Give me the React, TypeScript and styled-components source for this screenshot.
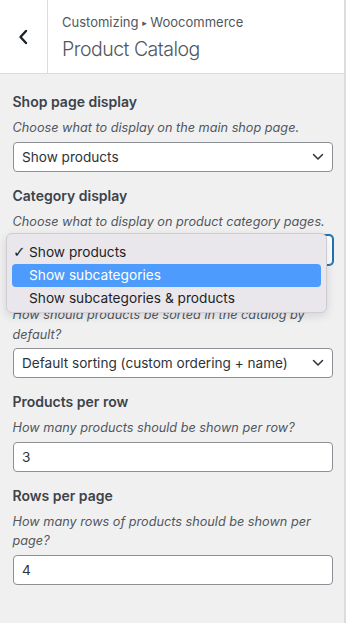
import styled, { createGlobalStyle } from "styled-components"

const GlobalStyle = createGlobalStyle`
  html, body {
    margin: 0;
    padding: 0;
    background: #f0f0f1;
  }
  * {
    box-sizing: border-box;
  }
`

type Field = {
  title: string
  description: string
  kind: "select" | "number"
  value: string
  focused?: boolean
}

const fields: Field[] = [
  {
    title: "Shop page display",
    description: "Choose what to display on the main shop page.",
    kind: "select",
    value: "Show products"
  },
  {
    title: "Category display",
    description: "Choose what to display on product category pages.",
    kind: "select",
    value: "Show products",
    focused: true
  },
  {
    title: "Default product sorting",
    description: "How should products be sorted in the catalog by default?",
    kind: "select",
    value: "Default sorting (custom ordering + name)"
  },
  {
    title: "Products per row",
    description: "How many products should be shown per row?",
    kind: "number",
    value: "3"
  },
  {
    title: "Rows per page",
    description: "How many rows of products should be shown per page?",
    kind: "number",
    value: "4"
  }
]

const menuOptions = [
  { label: "Show products", checked: true, active: false },
  { label: "Show subcategories", checked: false, active: true },
  { label: "Show subcategories & products", checked: false, active: false }
]

export default function App() {
  return (
    <Panel>
      <GlobalStyle />
      <Header>
        <BackButton aria-label="Back">
          <svg width="10" height="16" viewBox="0 0 10 16">
            <polyline points="8,2 2.5,8 8,14" fill="none" stroke="#1d2327" strokeWidth="2.4" strokeLinecap="round" strokeLinejoin="round" />
          </svg>
        </BackButton>
        <HeaderText>
          <Breadcrumb>Customizing <Arrow>▸</Arrow> Woocommerce</Breadcrumb>
          <Title>Product Catalog</Title>
        </HeaderText>
      </Header>
      <Body>
        {fields.map((field, index) => (
          <Control key={index}>
            <ControlTitle>{field.title}</ControlTitle>
            <Description>{field.description}</Description>
            <InputBox focused={field.focused}>
              <span>{field.value}</span>
              {field.kind === "select" && (
                <svg width="12" height="8" viewBox="0 0 12 8">
                  <polyline points="1.5,1.5 6,6 10.5,1.5" fill="none" stroke="#2c3338" strokeWidth="1.5" strokeLinecap="round" strokeLinejoin="round" />
                </svg>
              )}
            </InputBox>
            {field.focused && (
              <Menu>
                {menuOptions.map((option, i) => (
                  <MenuItem key={i} active={option.active}>
                    {option.checked && <Check>✓</Check>}
                    {option.label}
                  </MenuItem>
                ))}
              </Menu>
            )}
          </Control>
        ))}
      </Body>
    </Panel>
  )
}

const Panel = styled.div`
  width: 346px;
  height: 623px;
  display: flex;
  flex-direction: column;
  background: #f0f0f1;
  border-right: 2px solid #dcdcde;
  font-family: Inter, "Liberation Sans", sans-serif;
  overflow: hidden;
`

const Header = styled.div`
  display: flex;
  flex-direction: row;
  height: 74px;
  flex-shrink: 0;
  background: #fff;
  border-bottom: 1px solid #dcdcde;
`

const BackButton = styled.div`
  width: 48px;
  display: flex;
  align-items: center;
  justify-content: center;
  border-right: 1px solid #dcdcde;
  padding-right: 2px;
`

const HeaderText = styled.div`
  display: flex;
  flex-direction: column;
  padding: 12px 0 0 14px;
`

const Breadcrumb = styled.div`
  font-size: 13px;
  line-height: 20px;
  color: #50575e;
`

const Arrow = styled.span`
  font-size: 9px;
  font-family: "DejaVu Sans", sans-serif;
  vertical-align: 1px;
`

const Title = styled.div`
  font-size: 19.5px;
  font-weight: 300;
  letter-spacing: -0.5px;
  line-height: 32px;
  color: #50575e;
`

const Body = styled.div`
  display: flex;
  flex-direction: column;
  gap: 13px;
  padding: 17px 11px 0 12.5px;
`

const Control = styled.div`
  position: relative;
  display: flex;
  flex-direction: column;
`

const ControlTitle = styled.div`
  font-size: 14px;
  font-weight: 600;
  line-height: 21px;
  color: #3c434a;
  margin-bottom: 6px;
`

const Description = styled.div`
  font-size: 12.7px;
  font-style: italic;
  line-height: 19.5px;
  color: #50575e;
  margin-bottom: 4px;
`

const InputBox = styled.div<{ focused?: boolean }>`
  height: 30px;
  display: flex;
  align-items: center;
  justify-content: space-between;
  padding: 0 8px 0 8.5px;
  background: #fff;
  border: 1px solid ${(props) => (props.focused ? "#2271b1" : "#8c8f94")};
  box-shadow: ${(props) => (props.focused ? "0 0 0 1px #2271b1" : "none")};
  border-radius: 4px;
  font-size: 13.6px;
  color: #2c3338;
`

const Menu = styled.div`
  position: absolute;
  left: -6.5px;
  top: 48px;
  width: 321px;
  height: 80px;
  padding: 7px 5px 5px 5px;
  background: #e9e7ec;
  border: 1px solid #cfcdd3;
  border-radius: 6px;
  box-shadow: 0 3px 10px rgba(0, 0, 0, 0.12);
  z-index: 2;
`

const MenuItem = styled.div<{ active?: boolean }>`
  position: relative;
  height: 23px;
  display: flex;
  align-items: center;
  padding-left: 17px;
  border-radius: 4px;
  font-size: 13.7px;
  color: ${(props) => (props.active ? "#fff" : "#1f1f1f")};
  background: ${(props) => (props.active ? "#4c9bfd" : "transparent")};
`

const Check = styled.span`
  position: absolute;
  left: 1px;
  font-size: 15px;
  font-family: "DejaVu Sans", sans-serif;
`
